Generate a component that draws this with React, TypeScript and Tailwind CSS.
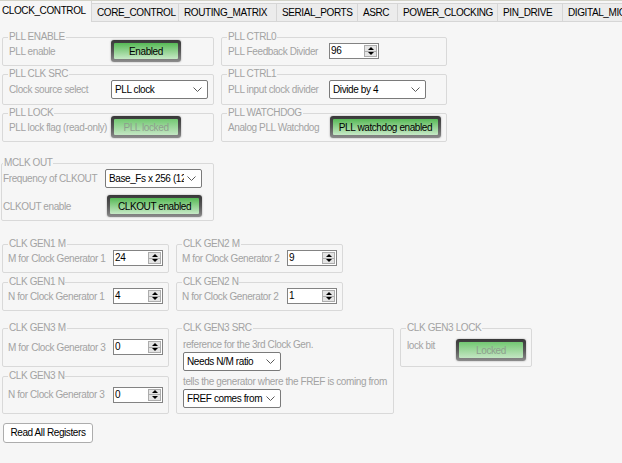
import React from 'react';

const font = { fontFamily: '"Liberation Sans", Arial, sans-serif' };

function Group({ title, className, legendClass, children }: { title: string; className: string; legendClass?: string; children: React.ReactNode }) {
  return (
    <fieldset className={`rounded-[2px] border border-[#d9d9d9] ${className}`}>
      <legend className={`px-[1px] leading-[12px] text-[#a3a3a3] ${legendClass ?? 'ml-[5px]'}`}>{title}</legend>
      {children}
    </fieldset>
  );
}

function Toggle({ label, className, disabled }: { label: string; className: string; disabled?: boolean }) {
  return (
    <div className={`h-[22px] rounded-[3px] bg-linear-to-b from-[#383838] via-[#575757] to-[#8c8c8c] p-[3px] shadow-[0_0_2px_rgba(0,0,0,0.35)] ${className}`}>
      <div
        className={`flex h-full items-end justify-center whitespace-nowrap rounded-[1px] bg-linear-to-b pb-[1px] leading-[12px] ${
          disabled ? 'from-[#72c872] to-[#c3e6c3] text-[#8e9e8e]' : 'from-[#55b955] to-[#c6e9c6] text-black'
        }`}
      >
        {label}
      </div>
    </div>
  );
}

function Spin({ value }: { value: string }) {
  return (
    <div className="flex h-[16px] w-[50px] border border-[#838383] bg-white">
      <span className="flex-1 pl-[1px] leading-[14px] text-black">{value}</span>
      <div className="my-[1px] mr-[1px] flex w-[13px] flex-col border border-[#acacac] bg-[#e4e4e4]">
        <div className="flex flex-1 items-center justify-center border-b border-[#acacac]">
          <svg width="6" height="3" viewBox="0 0 6 3">
            <path d="M0 3 L3 0 L6 3Z" fill="#000" />
          </svg>
        </div>
        <div className="flex flex-1 items-center justify-center">
          <svg width="6" height="3" viewBox="0 0 6 3">
            <path d="M0 0 L3 3 L6 0Z" fill="#000" />
          </svg>
        </div>
      </div>
    </div>
  );
}

function Combo({ value, className }: { value: string; className: string }) {
  return (
    <div className={`flex h-[19px] items-center rounded-[2px] border border-[#7a7a7a] bg-white pl-[3px] pr-[5px] ${className}`}>
      <span className="flex-1 overflow-hidden whitespace-nowrap text-black">{value}</span>
      <svg width="9" height="5" viewBox="0 0 9 5" className="ml-[3px] shrink-0">
        <path d="M0.5 0.5 L4.5 4.5 L8.5 0.5" stroke="#5a5a5a" fill="none" strokeWidth="1" />
      </svg>
    </div>
  );
}

// content area spans from the top border line to the bottom border
function Row({ label, labelClass, h, pad, children }: { label: string; labelClass: string; h: string; pad?: string; children: React.ReactNode }) {
  return (
    <div className={`-mt-[6px] flex items-center ${h} ${pad ?? 'pl-[6px]'}`}>
      <span className={`whitespace-nowrap text-[#a3a3a3] ${labelClass}`}>{label}</span>
      {children}
    </div>
  );
}

const tabs = [
  { name: 'CORE_CONTROL', w: 'w-[87px]' },
  { name: 'ROUTING_MATRIX', w: 'w-[98px]' },
  { name: 'SERIAL_PORTS', w: 'w-[81px]' },
  { name: 'ASRC', w: 'w-[40px]' },
  { name: 'POWER_CLOCKING', w: 'w-[100px]' },
  { name: 'PIN_DRIVE', w: 'w-[65px]' },
  { name: 'DIGITAL_MIC', w: 'w-[80px]' },
];

export default function App() {
  return (
    <div className="h-[463px] w-[622px] overflow-hidden bg-[#f6f6f6] text-[10px] tracking-[-0.4px]" style={font}>
      {/* tab bar */}
      <div className="flex h-[22px] items-end overflow-hidden border-t border-[#d2d2c8]">
        <div className="h-[21px] w-[92px] shrink-0 border-r border-[#d6d6d6] bg-[#f6f6f6] pl-[2px] leading-[19px] text-black">
          CLOCK_CONTROL
        </div>
        {tabs.map((t) => (
          <div
            key={t.name}
            className={`h-[19px] shrink-0 whitespace-nowrap border-r border-b border-t border-[#d6d6d6] bg-[#ececec] pl-[5px] leading-[18px] text-black ${t.w}`}
          >
            {t.name}
          </div>
        ))}
        <div className="flex-1 border-b border-[#d6d6d6]" />
      </div>

      <div className="pl-[2px] pt-[9px]">
        {/* PLL section */}
        <div className="grid grid-cols-[212px_226px] grid-rows-[35px_37px_35px] gap-x-[7px] gap-y-[2px]">
          <Group title="PLL ENABLE" className="h-[35px]">
            <Row label="PLL enable" labelClass="w-[102px]" h="h-[28px]">
              <Toggle label="Enabled" className="w-[70px]" />
            </Row>
          </Group>
          <Group title="PLL CTRL0" className="h-[35px]">
            <Row label="PLL Feedback Divider" labelClass="w-[101px]" h="h-[28px]">
              <Spin value="96" />
            </Row>
          </Group>
          <Group title="PLL CLK SRC" className="h-[37px]">
            <Row label="Clock source select" labelClass="w-[102px]" h="h-[30px]">
              <Combo value="PLL clock" className="w-[97px]" />
            </Row>
          </Group>
          <Group title="PLL CTRL1" className="h-[37px]">
            <Row label="PLL input clock divider" labelClass="w-[101px]" h="h-[30px]">
              <Combo value="Divide by 4" className="w-[97px]" />
            </Row>
          </Group>
          <Group title="PLL LOCK" className="h-[35px]">
            <Row label="PLL lock flag (read-only)" labelClass="w-[102px]" h="h-[28px]">
              <Toggle label="PLL locked" className="w-[70px]" disabled />
            </Row>
          </Group>
          <Group title="PLL WATCHDOG" className="h-[35px]">
            <Row label="Analog PLL Watchdog" labelClass="w-[102px]" h="h-[28px]">
              <Toggle label="PLL watchdog enabled" className="w-[111px]" />
            </Row>
          </Group>
        </div>

        {/* MCLK OUT */}
        <Group title="MCLK OUT" className="-ml-[1px] mt-[15px] h-[64px] w-[213px]" legendClass="ml-[1px]">
          <div className="flex flex-col gap-[7px] pl-[1px]">
            <div className="flex items-center">
              <span className="w-[102px] whitespace-nowrap text-[#a3a3a3]">Frequency of CLKOUT</span>
              <Combo value="Base_Fs x 256 (12.288 MHz)" className="w-[97px]" />
            </div>
            <div className="flex items-center">
              <span className="w-[104px] whitespace-nowrap text-[#a3a3a3]">CLKOUT enable</span>
              <Toggle label="CLKOUT enabled" className="w-[95px]" />
            </div>
          </div>
        </Group>

        {/* CLK GEN 1/2 */}
        <div className="mt-[17px] grid grid-cols-[167px_167px] gap-x-[7px] gap-y-[3px]">
          <Group title="CLK GEN1 M" className="h-[35px]">
            <Row label="M for Clock Generator 1" labelClass="w-[105px]" h="h-[28px]" pad="pl-[5px]">
              <Spin value="24" />
            </Row>
          </Group>
          <Group title="CLK GEN2 M" className="h-[35px]">
            <Row label="M for Clock Generator 2" labelClass="w-[105px]" h="h-[28px]" pad="pl-[5px]">
              <Spin value="9" />
            </Row>
          </Group>
          <Group title="CLK GEN1 N" className="h-[35px]">
            <Row label="N for Clock Generator 1" labelClass="w-[105px]" h="h-[28px]" pad="pl-[5px]">
              <Spin value="4" />
            </Row>
          </Group>
          <Group title="CLK GEN2 N" className="h-[35px]">
            <Row label="N for Clock Generator 2" labelClass="w-[105px]" h="h-[28px]" pad="pl-[5px]">
              <Spin value="1" />
            </Row>
          </Group>
        </div>

        {/* CLK GEN 3 */}
        <div className="mt-[11px] flex items-start">
          <div className="flex w-[167px] flex-col gap-[3px]">
            <Group title="CLK GEN3 M" className="h-[45px]">
              <Row label="M for Clock Generator 3" labelClass="w-[105px]" h="h-[38px]" pad="pl-[5px]">
                <Spin value="0" />
              </Row>
            </Group>
            <Group title="CLK GEN3 N" className="h-[44px]">
              <Row label="N for Clock Generator 3" labelClass="w-[105px]" h="h-[37px]" pad="pl-[5px]">
                <Spin value="0" />
              </Row>
            </Group>
          </div>
          <Group title="CLK GEN3 SRC" className="ml-[7px] h-[92px] w-[218px]">
            <div className="mt-[5px] flex flex-col items-start pl-[6px]">
              <span className="whitespace-nowrap leading-[12px] text-[#a3a3a3]">reference for the 3rd Clock Gen.</span>
              <Combo value="Needs N/M ratio" className="mt-[1px] w-[98px]" />
              <span className="mt-[5px] whitespace-nowrap leading-[12px] text-[#a3a3a3]">
                tells the generator where the FREF is coming from
              </span>
              <Combo value="FREF comes from MCLK" className="mt-[1px] w-[98px]" />
            </div>
          </Group>
          <Group title="CLK GEN3 LOCK" className="ml-[6px] h-[45px] w-[132px]">
            <div className="mt-[5px] flex items-start pl-[6px]">
              <span className="mt-[1px] w-[49px] whitespace-nowrap leading-[12px] text-[#a3a3a3]">lock bit</span>
              <Toggle label="Locked" className="w-[70px]" disabled />
            </div>
          </Group>
        </div>

        <button className="ml-[1px] mt-[9px] h-[20px] w-[90px] rounded-[3px] border border-[#adadad] bg-white text-center leading-[18px] text-black">
          Read All Registers
        </button>
      </div>
    </div>
  );
}
